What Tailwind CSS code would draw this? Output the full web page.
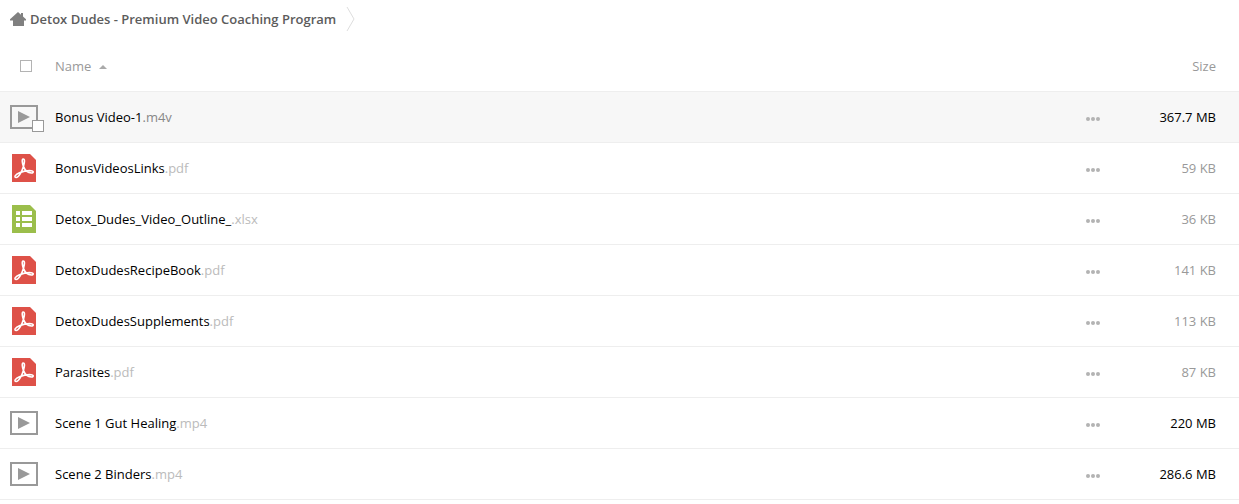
<!DOCTYPE html>
<html lang="en">
<head>
<meta charset="utf-8">
<meta name="viewport" content="width=device-width, initial-scale=1">
<title>Detox Dudes - Premium Video Coaching Program</title>
<script src="https://cdn.jsdelivr.net/npm/@tailwindcss/browser@4"></script>
</head>
<body class="bg-white font-['Open_Sans',sans-serif] text-[13px] leading-5 text-black">
<svg class="hidden" aria-hidden="true">
  <symbol id="video" viewBox="0 0 28 24">
    <rect x="1" y="1" width="26" height="22" fill="none" stroke="#999" stroke-width="2"/>
    <path d="M8 6v12l12-6z" fill="#999"/>
  </symbol>
  <symbol id="pdf" viewBox="0 0 24 28">
    <path d="M0 0h18l6 6v22H0z" fill="#de5148"/>
    <path d="M11.2 5c1.800 0 1.500 3.200.3 7.300C10 17.500 6.600 23.500 4.200 23.500c-2.600 0-.9-3.200 3.300-4.800 4.200-1.600 8.500-2.200 11.500-2 3.200.3 2.600 2.500.4 2.300-3.300-.3-6.600-3.200-7.900-6.400C10.300 9.600 9.600 5 11.200 5z" fill="none" stroke="#fff" stroke-width="1.600" stroke-linejoin="round"/>
  </symbol>
  <symbol id="sheet" viewBox="0 0 24 28">
    <path d="M0 0h18l6 6v22H0z" fill="#9bbe4b"/>
    <path d="M4 6h4v4H4zM10 6h10v4H10zM4 12h4v4H4zM10 12h10v4H10zM4 18h4v4H4zM10 18h10v4H10z" fill="#fff"/>
  </symbol>
  <symbol id="dots" viewBox="0 0 14 4">
    <circle cx="2" cy="2" r="2"/><circle cx="7" cy="2" r="2"/><circle cx="12" cy="2" r="2"/>
  </symbol>
</svg>

<nav aria-label="Breadcrumb" class="flex h-10 items-center pb-0.5 pl-2.5">
  <a href="#" class="flex items-center gap-1 font-semibold text-[#5c5c5c]">
    <svg class="h-4 w-4 shrink-0" viewBox="0 0 16 16" fill="#808080"><path d="M8 1l3 2.700V2h2v3.500l3 2.800V9.500h-2V15H3V9.500H0V8.300z"/></svg>
    <span>Detox Dudes - Premium Video Coaching Program</span>
  </a>
  <svg class="ml-2.5 h-6 w-2.5" viewBox="0 0 10 24" fill="none" stroke="#ddd"><path d="M1 0l7 12-7 12"/></svg>
</nav>

<table class="w-full table-fixed border-collapse">
  <colgroup><col class="w-[55px]"><col><col class="w-12"><col class="w-[125px]"></colgroup>
  <thead>
    <tr class="h-[51px] border-b border-[#eee] text-[#999]">
      <th class="pt-px pl-5 text-left"><input type="checkbox" aria-label="Select all" class="block size-3 appearance-none border border-[#b3b3b3] bg-white checked:bg-[#999]"></th>
      <th class="pt-px text-left font-normal"><button type="button" class="flex items-center gap-2">Name <svg class="mt-0.5 h-1 w-2" viewBox="0 0 8 4" fill="#aaa"><path d="M0 4l4-4 4 4z"/></svg></button></th>
      <th></th>
      <th class="pt-px pr-[23px] text-right font-normal">Size</th>
    </tr>
  </thead>
  <tbody id="files"></tbody>
</table>

<template id="row">
  <tr class="h-[51px] border-b border-[#eee]">
    <td class="pl-2.5"><div class="relative flex w-7 justify-center"><svg class="icon"><use/></svg></div></td>
    <td class="truncate"><a href="#"><span class="name"></span><span class="ext text-[#bbb]"></span></a></td>
    <td><button type="button" aria-label="More actions" class="ml-5 mt-1 block py-1"><svg class="block h-1 w-3.5" fill="#b3b3b3"><use href="#dots"/></svg></button></td>
    <td class="size pr-[23px] text-right"></td>
  </tr>
</template>

<script>
const files = [
  ['video', 'Bonus Video-1', '.m4v', '367.7 MB', true],
  ['pdf', 'BonusVideosLinks', '.pdf', '59 KB'],
  ['sheet', 'Detox_Dudes_Video_Outline_', '.xlsx', '36 KB'],
  ['pdf', 'DetoxDudesRecipeBook', '.pdf', '141 KB'],
  ['pdf', 'DetoxDudesSupplements', '.pdf', '113 KB'],
  ['pdf', 'Parasites', '.pdf', '87 KB'],
  ['video', 'Scene 1 Gut Healing', '.mp4', '220 MB'],
  ['video', 'Scene 2 Binders', '.mp4', '286.6 MB'],
];
const body = document.getElementById('files');
for (const [kind, name, ext, size, hovered] of files) {
  const row = document.getElementById('row').content.cloneNode(true).firstElementChild;
  row.querySelector('use').setAttribute('href', '#' + kind);
  row.querySelector('.icon').setAttribute('class', kind === 'video' ? 'block h-6 w-7' : 'block h-7 w-6');
  row.querySelector('.name').textContent = name;
  row.querySelector('.ext').textContent = ext;
  const cell = row.querySelector('.size');
  cell.textContent = size;
  if (size.endsWith('KB')) cell.classList.add('text-[#999]');
  if (hovered) {
    row.classList.add('bg-[#f7f7f7]');
    row.querySelector('.ext').classList.replace('text-[#bbb]', 'text-[#888]');
    row.querySelector('.relative').insertAdjacentHTML('beforeend', '<input type="checkbox" aria-label="Select Bonus Video-1.m4v" class="absolute -right-1.5 -bottom-[3px] size-3 appearance-none border border-[#999] bg-white checked:bg-[#999]">');
  }
  body.append(row);
}
</script>
</body>
</html>
